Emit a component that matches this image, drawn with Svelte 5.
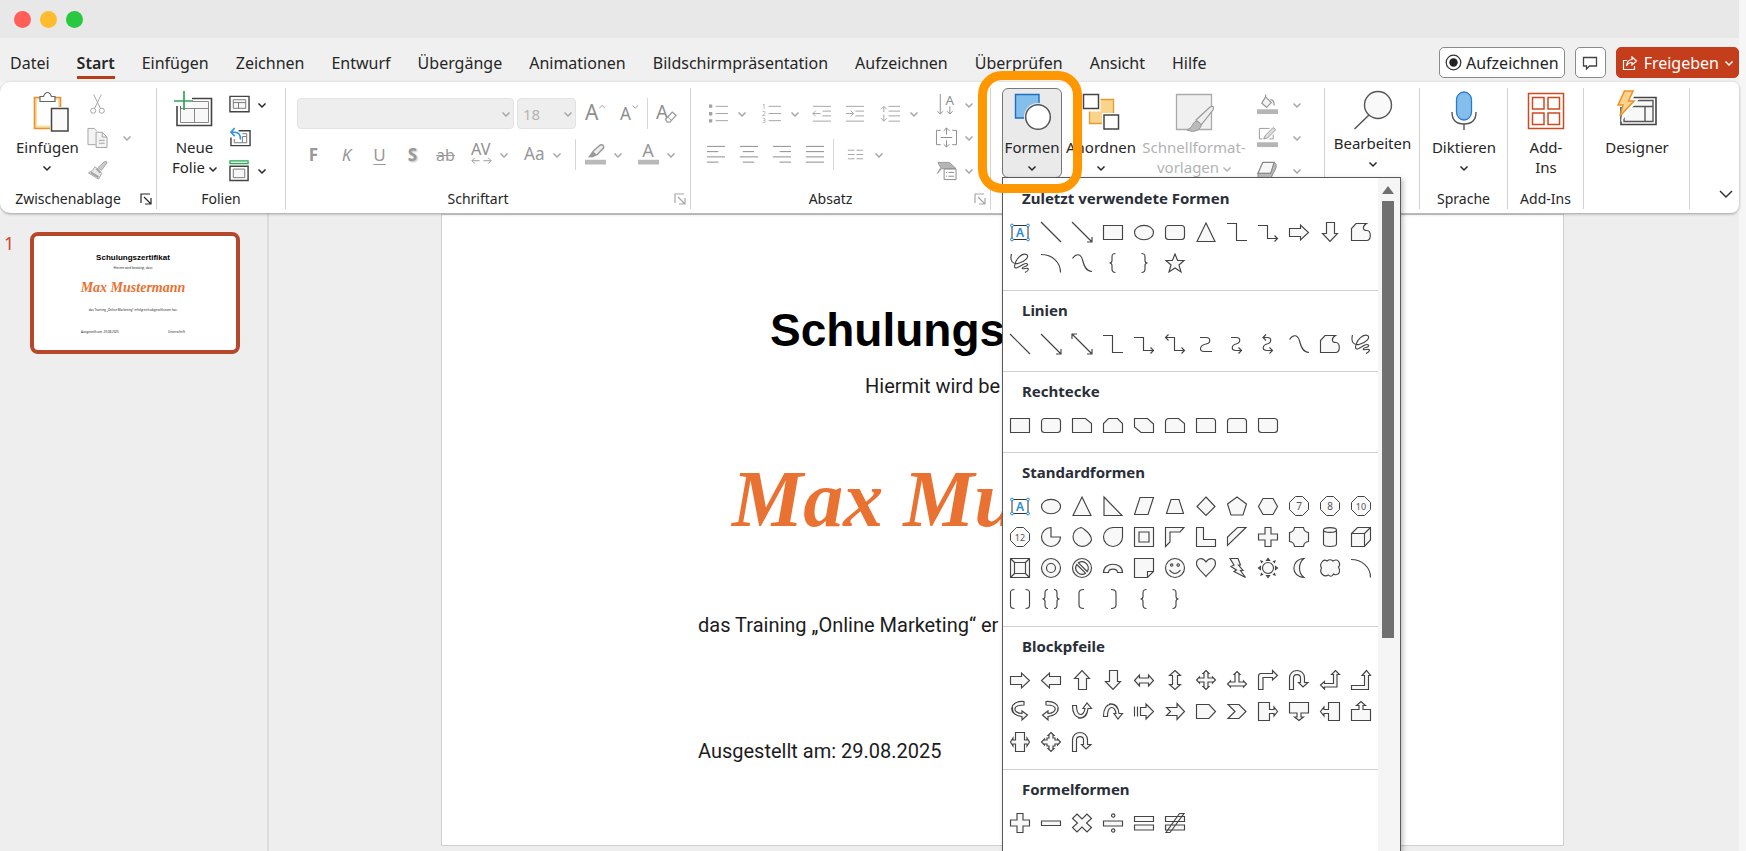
<script>
  const tabs = ['Datei', 'Start', 'Einfügen', 'Zeichnen', 'Entwurf', 'Übergänge', 'Animationen', 'Bildschirmpräsentation', 'Aufzeichnen', 'Überprüfen', 'Ansicht', 'Hilfe'];

  // Shape gallery glyphs on a 20x20 grid. A leading "~" marks an open outline without fill,
  // a leading "<" marks raw SVG markup.
  const g = {
    text: '<path d="M2 3.5h16v14H2z" fill="#fff" stroke="#333"/><text x="10" y="15" font-size="12" font-weight="600" text-anchor="middle" fill="#2b88d0" font-family="Noto Sans">A</text><g fill="#fff" stroke="#1c86d1"><circle cx="2" cy="3.5" r="1.4"/><circle cx="18" cy="3.5" r="1.4"/><circle cx="2" cy="17.5" r="1.4"/><circle cx="18" cy="17.5" r="1.4"/></g>',
    line: '~M0 0L20 20',
    arrow: '~M0 0L20 20M20 15V20H15',
    darrow: '~M0 0L20 20M20 15V20H15M0 5V0H5',
    rect: 'M.5 3.5h19v14h-19z',
    oval: 'M.5 10.5a9.5 7.2 0 1 0 19 0a9.5 7.2 0 1 0-19 0z',
    round: 'M3.5 3.5h13a3 3 0 0 1 3 3v8a3 3 0 0 1-3 3h-13a3 3 0 0 1-3-3v-8a3 3 0 0 1 3-3z',
    tri: 'M10 1L19 19.5H1z',
    elbow: '~M0 1.5H9.5V18.5H20',
    elbowA: '~M0 3.5H9.5V16.5H19.5M16.5 13.5L19.5 16.5L16.5 19.5',
    elbowD: '~M.5 3.5H9.5V16.5H19.5M16.5 13.5L19.5 16.5L16.5 19.5M3.5 .5L.5 3.5L3.5 6.5',
    curve: '~M4 3.5H10C15 3.500 15 9 10 10C3 11.500 3 17.500 8 17.500H16',
    curveA: '~M4 3.500H9C14 3.500 14 8.500 9 10C4 11.500 4 16.500 9 16.500H14.500M11.500 13.500L14.500 16.500L11.500 19.500',
    curveD: '~M5 3.500H9C14 3.500 14 8.500 9 10C4 11.500 4 16.500 9 16.500H14.500M11.500 13.500L14.500 16.500L11.500 19.500M8 .5L5 3.500L8 6.500',
    ra: 'M.5 6.500h11V3L19.500 10.500L11.500 18V14.500H.5z',
    la: 'M19.500 6.500h-11V3L.5 10.500L8.500 18V14.500H19.500z',
    ua: 'M6.500 19.500v-11H2.500L10 .5L17.500 8.500H14.500V19.500z',
    da: 'M6.500 .5v11H2.500L10 19.500L17.500 11.500H14.500V.5z',
    free: 'M5 1.500H15.500C11.500 4 11 8.500 16 8.500C20.500 8.500 20.500 18.500 15.500 18.500H.5V6.500z',
    scribble: '~M1.500 1C-.5 8 3 11.500 8 10.500C15 9 20 3.500 16.500 1.500C12 -.5 5.500 6 4.500 13C4.500 17 9 14 13 11.500C18 9 19.500 12.500 15 13.500C11 14.500 11.500 16.500 15 15.500C19 14.500 20 17 15 19.500',
    arc: '~M0 1.500C11 1.500 19.500 9 19.500 19.500',
    wave: '~M.5 5.500C4 0 9 .5 10.500 7C12 13 14 18.500 20 18.500',
    lb: '~M12.500 .5C9.500 .5 9 1.500 9 4V7.500Q9 10 6.500 10Q9 10 9 12.500V16Q9 19.500 12.500 19.500',
    rb: '~M7.500 .5C10.500 .5 11 1.500 11 4V7.500Q11 10 13.500 10Q11 10 11 12.500V16Q11 19.500 7.500 19.500',
    star: 'M10 1L12.600 7.500H19L14 12L16 19L10 15L4 19L6 12L1 7.500H7.400z',
    snip1: 'M.5 3.500h13l6 5v9h-19z',
    snip2: 'M5.500 3.500h9l5 5v9H.5v-9z',
    snipD: 'M.5 3.500h13l6 5.500v8.500H7L.5 12z',
    snipR: 'M4 3.500h9.500l6 5v9H.5V7Q.5 3.500 4 3.500z',
    rnd1: 'M.5 3.500h16q3 0 3 3v11h-19z',
    rnd2: 'M3.500 3.500h13q3 0 3 3v11h-19v-11q0-3 3-3z',
    rndD: 'M.5 3.500h16q3 0 3 3v8q0 3-3 3h-13q-3 0-3-3z',
    rtri: 'M1 1V19.500H19z',
    para: 'M6 1.500H19.500L14 18.500H.5z',
    trap: 'M6 3.500H14L18.500 17.500H1.500z',
    dia: 'M10 1L19 10.500L10 19.500L1 10.500z',
    pent: 'M10 1L19.500 8L16 19H4L.5 8z',
    hexa: 'M5 2.500H15L19.500 10.500L15 18.500H5L.5 10.500z',
    pie: 'M10 .5A9.500 9.500 0 1 0 19.500 10H10z',
    chord: 'M9 .5A9.500 9.500 0 1 0 19.500 13Q19.500 8 13 3Q11 1 9 .5z',
    tear: 'M10 .5H19.500V10A9.500 9.500 0 1 1 10 .5z',
    frame: 'M.5 .5h19v19H.5zM5 5h10v10H5z',
    half: 'M.5 .5H19L15 5H5V15L.5 19.500z',
    ell: 'M.5 .5H7.500V12.500H19.500V19.500H.5z',
    stripe: 'M10.500 .5H19L.5 18.500V10z',
    plus: 'M7 .5h6V7h6.500v6H13v6.500H7V13H.5V7H7z',
    plaque: 'M5.500 .5H14.500Q15 5 19.500 5.500V14.500Q15 15 14.500 19.500H5.500Q5 15 .5 14.500V5.500Q5 5 5.500 .5z',
    can: 'M3.500 3V17C3.500 20.300 16.500 20.300 16.500 17V3C16.500 -.2 3.500 -.2 3.500 3zC3.500 6.200 16.500 6.200 16.500 3',
    cube: 'M.5 6.500L6.500 .5H19.500V13L13.500 19.500H.5zM.5 6.500H13.500V19.500M13.500 6.500L19.500 .5',
    bevel: 'M.5 .5h19v19H.5zM4.500 4.500h11v11h-11zM.5 .5l4 4M19.500 .5l-4 4M.5 19.500l4-4M19.500 19.500l-4-4',
    donut: 'M.5 10a9.500 9.500 0 1 0 19 0a9.500 9.500 0 1 0-19 0zM5.500 10a4.500 4.500 0 1 0 9 0a4.500 4.500 0 1 0-9 0z',
    no: 'M.5 10a9.500 9.500 0 1 0 19 0a9.500 9.500 0 1 0-19 0zM6.500 4.800A6.300 6.300 0 0 1 15.200 13.500zM4.800 6.500A6.300 6.300 0 0 0 13.500 15.200z',
    barc: 'M.5 14.500C.5 3.500 19.500 3.500 19.500 14.500H14.500C14.500 10 5.500 10 5.500 14.500z',
    fold: 'M.5 .5H19.500V13.500L13.500 19.500H.5zM13.500 19.500V13.500H19.500',
    smile: 'M.5 10a9.500 9.500 0 1 0 19 0a9.500 9.500 0 1 0-19 0zM4.500 12Q10 19 15.500 12M5.500 7a1.200 1.200 0 1 0 2.400 0a1.200 1.200 0 1 0-2.400 0M12 7a1.200 1.200 0 1 0 2.400 0a1.200 1.200 0 1 0-2.400 0',
    heart: 'M10 4C6 -2 .5 1 .5 5.500C.5 11 8 15 10 18.500C12 15 19.500 11 19.500 5.500C19.500 1 14 -2 10 4z',
    bolt: 'M3 .5H11L13.500 7H11.500L16 12.500H13.500L18.500 19.500L7 13.500L9.500 12L4 8.500L7 7z',
    sun: 'M4.500 10a5.500 5.500 0 1 0 11 0a5.500 5.500 0 1 0-11 0zM8.500 2.500L10 .5L11.500 2.500zM8.500 17.500L10 19.500L11.500 17.500zM2.500 8.500L.5 10L2.500 11.500zM17.500 8.500L19.500 10L17.500 11.500zM3 3l1.500 .5l-1 1zM17 3l-1.500 .5l1 1zM3 17l.5-1.500l1 1zM17 17l-.5-1.500l-1 1z',
    moon: 'M15 .5C1.500 1 1.500 19 15 19.500C9 15 9 5 15 .5z',
    cloud: 'M2 4Q4 1 7 3Q10 .5 13 3Q17 .5 19 4Q20.500 7 18.500 9Q21 14 18 16Q15 17.500 13.500 16Q11 20 8.500 17Q5 19 2.500 16.500Q-.5 14 1.500 10Q-.5 7 2 4z',
    brk: '~M4.500 .5Q.5 .5 .5 3.500V16.500Q.5 19.500 4.500 19.500M15.500 .5Q19.500 .5 19.500 3.500V16.500Q19.500 19.500 15.500 19.500',
    brc: '~M7 .5Q4 .5 4 4V7.500Q4 10 1.500 10Q4 10 4 12.500V16Q4 19.500 7 19.500M13 .5Q16 .5 16 4V7.500Q16 10 18.500 10Q16 10 16 12.500V16Q16 19.500 13 19.500',
    bl: '~M12 .5Q7 .5 7 4V16Q7 19.500 12 19.500',
    br: '~M8 .5Q13 .5 13 4V16Q13 19.500 8 19.500',
    lra: 'M.5 10.500L5.500 5V8H14.500V5L19.500 10.500L14.500 16V13H5.500V16z',
    uda: 'M10 .5L15.500 5.500H12.500V14.500H15.500L10 19.500L4.500 14.500H7.500V5.500H4.500z',
    quad: 'M10 .5L13 3.500H12V8H16.500V7L19.500 10L16.500 13V12H12V16.500H13L10 19.500L7 16.500H8V12H3.500V13L.5 10L3.500 7V8H8V3.500H7z',
    tria: 'M10 1.500L13 4.500H12V12H16.500V11L19.500 14L16.500 17V16H3.500V17L.5 14L3.500 11V12H8V4.500H7z',
    bent: 'M.5 19.500V6Q.5 3.500 3 3.500H14.500V.5L19.500 5.500L14.500 10V7.500H5V19.500z',
    uturn: 'M.5 19.500V8C.5 -2 15.500 -2 15.500 8V12.500H19L14 17L9.500 12.500H11.500V8C11.500 3.500 4.500 3.500 4.500 8V19.500z',
    leftup: 'M.5 15L4.500 11.500V13.500H13.500V4.500H11.500L15.500 .5L19.500 4.500H17V17H4.500V19z',
    bentup: 'M.5 15.500H13.500V5.500H11L15.500 .5L19.500 5.500H17.500V19.500H.5z',
    cr: 'M14 .5C-2 -.5 -2 14.500 12 15.500V19L17.500 14L12 10V12.500C3 12 1.500 4 14 4zM2.500 6C2 14 8 15 12 15.500',
    cl: 'M5 .5C21 -.5 21 14.500 7 15.500V19L1.500 14L7 10V12.500C16 12 18 4 5 4zM17 6C17.500 14 11 15 7 15.500',
    cu: 'M.5 4.500C0 20.500 15 20.500 16 7.500H19.500L15 2L11 7.500H13C12 16 4.500 16 4.500 4.500zM6 17C14 18 15.500 12 16 7.500',
    cd: 'M.5 15.500C0 -.5 15 -.5 16 12.500H19.500L15 18L11 12.500H13C12 4 4.500 4 4.500 15.500zM6 3C14 2 15.500 8 16 12.500',
    striped: 'M.5 5.500V15.500M3.500 5.500V15.500M6.500 6.500H12V3L19.500 10.500L12 18V14.500H6.500z',
    notch: 'M1.500 6.500H12V2.500L19.500 10.500L12 18.500V14.500H1.500L5.500 10.500z',
    penta: 'M.5 3.500H13L19.500 10.500L13 17.500H.5z',
    chev: 'M1 3.500H12L19 10.500L12 17.500H1L8 10.500z',
    cor: 'M.5 1.500H11.500V8.500H16V6L19.500 10.500L16 15V12.500H11.500V19.500H.5z',
    cod: 'M.5 1.500H19.500V12H12V16H14.500L10 19.500L5.500 16H8V12H.5z',
    col: 'M19.500 1.500H8.500V8.500H4V6L.5 10.500L4 15V12.500H8.500V19.500H19.500z',
    cou: 'M.5 19.500H19.500V8.500H12V4.500H14.500L10 .5L5.500 4.500H8V8.500H.5z',
    colr: 'M5.500 .5H14.500V8H17V6L19.500 10L17 14V12H14.500V19.500H5.500V12H3V14L.5 10L3 6V8H5.500z',
    coq: 'M10 .5L13 3.500H12V6H14V8H16.500V7L19.500 10L16.500 13V12H14V14H12V16.500H13L10 19.500L7 16.500H8V14H6V12H3.500V13L.5 10L3.500 7V8H6V6H8V3.500H7z',
    minus: 'M.5 8h19v4.500H.5z',
    times: 'M5 1L10 6L15 1L19.500 5.500L14.500 10L19.500 14.500L15 19L10 14L5 19L.5 14.500L5.500 10L.5 5.500z',
    div: 'M.5 8h19v5H.5zM8.500 2.500a1.700 1.700 0 1 0 3.400 0a1.700 1.700 0 1 0-3.400 0M8.500 17.500a1.700 1.700 0 1 0 3.400 0a1.700 1.700 0 1 0-3.400 0',
    eq: 'M.5 3.500h19v5H.5zM.5 12h19v5H.5z',
    neq: 'M.5 3.500h19v5H.5zM.5 12h19v5H.5zM14.500 .5H19L5 19.500H1z'
  };
  const octagon = (n) => `<path d="M6.500 .5h7l6 6v7l-6 6h-7l-6-6v-7z" fill="#fafafa" stroke="#444"/><text x="10" y="13.500" font-size="${n.length > 1 ? 9 : 10}" text-anchor="middle" fill="#555" font-family="Noto Sans">${n}</text>`;
  for (const n of ['7', '8', '10', '12']) g['n' + n] = octagon(n);

  const glyph = (k) => {
    const s = g[k];
    if (s[0] === '<') return s;
    const open = s[0] === '~';
    return `<path d="${open ? s.slice(1) : s}" fill="${open ? 'none' : '#f8f8f8'}" stroke="#444" stroke-width="1.150"/>`;
  };

  const sections = [
    ['Zuletzt verwendete Formen', 'text line arrow rect oval round tri elbow elbowA ra da free scribble arc wave lb rb star'],
    ['Linien', 'line arrow darrow elbow elbowA elbowD curve curveA curveD wave free scribble'],
    ['Rechtecke', 'rect round snip1 snip2 snipD snipR rnd1 rnd2 rndD'],
    ['Standardformen', 'text oval tri rtri para trap dia pent hexa n7 n8 n10 n12 pie chord tear frame half ell stripe plus plaque can cube bevel donut no barc fold smile heart bolt sun moon cloud arc brk brc bl br lb rb'],
    ['Blockpfeile', 'ra la ua da lra uda quad tria bent uturn leftup bentup cr cl cu cd striped notch penta chev cor cod col cou colr coq uturn'],
    ['Formelformen', 'plus minus times div eq neq']
  ].map(([title, keys]) => ({ title, keys: keys.split(' ') }));

  const G = '#a3a3a3';
  const T = 'font-family="Noto Sans"';
  // Small ribbon icons, 22x22
  const s = {
    cut: `<path d="M7 .5L14 15M15 .5L8 15" stroke="${G}" fill="none"/><circle cx="6.500" cy="17.500" r="2.700" fill="none" stroke="${G}"/><circle cx="15.500" cy="17.500" r="2.700" fill="none" stroke="${G}"/>`,
    copy: `<path d="M9 18.500H1V1.500H7.500L10 4" fill="#f3f3f3" stroke="${G}"/><path d="M9.500 5.500H16L21 10.500V21.500H9.500z" fill="#f3f3f3" stroke="${G}"/><path d="M16 5.500V10.500H21M12.500 14h6M12.500 17h6" fill="none" stroke="${G}"/>`,
    brush: `<path d="M11.500 8L18 2Q21 .5 21 3L15 11z" fill="#ccc" stroke="${G}"/><path d="M8.500 7L15.500 14L12 20L1.500 13.500Q6 12 8.500 7z" fill="#e8e8e8" stroke="${G}"/><path d="M4 13L12 18M10 9L14 13.500" stroke="${G}" stroke-width="2"/>`,
    layout: '<path d="M1 2.500h20v16H1z" fill="#fff" stroke="#444" stroke-width="1.500"/><path d="M4.500 6h13v9h-13zM4.500 9h13M10 9v6" fill="#f7f7f7" stroke="#777"/>',
    reset: '<path d="M9 4h12v15.500H1V11" fill="#fff" stroke="#444" stroke-width="1.500"/><path d="M13 7h4.500v9.500h-13v-4M13 10h4M13 10v6" fill="none" stroke="#777"/><path d="M1 5.500H5Q11 5.500 11 13M5 1L1 5.500L5 9.500" fill="none" stroke="#2b95e0" stroke-width="1.700"/>',
    section: '<path d="M1 .8h19v3H1z" fill="#d5f2dc" stroke="#2fa558" stroke-width="1.300"/><path d="M1 6.500h19v15H1z" fill="#fff" stroke="#444" stroke-width="1.500"/><path d="M4.500 9.500h12v9h-12z" fill="#f7f7f7" stroke="#777"/>',
    bullets: `<path d="M8 3.500h13M8 11h13M8 18.500h13" stroke="${G}"/><path d="M1 1.500h3.500v3.500H1zM1 9.500h3.500V13H1zM1 17h3.500v3.500H1z" fill="${G}"/>`,
    numbers: `<path d="M8 3.500h13M8 11h13M8 18.500h13" stroke="${G}"/><g fill="${G}" font-size="7" ${T}><text x="1" y="6">1</text><text x="1" y="13.500">2</text><text x="1" y="21">3</text></g>`,
    outdent: `<path d="M2 3.500h19M12 8.500h9M12 13.500h9M2 19h19M2 11h8M5 8L2 11L5 14" stroke="${G}" fill="none"/>`,
    indent: `<path d="M2 3.500h19M12 8.500h9M12 13.500h9M2 19h19M2 11h8M7 8L10 11L7 14" stroke="${G}" fill="none"/>`,
    spacing: `<path d="M9 3.500h12M9 8.500h12M9 13.500h12M9 19h12M4 3.500v6M1 6.500l3-3l3 3M4 12v7M1 16l3 3l3-3" stroke="${G}" fill="none"/>`,
    left: '<path d="M2 2.500h19M2 8h12M2 13.500h19M2 19h12" stroke="#888"/>',
    center: '<path d="M2 2.500h19M5 8h12M2 13.500h19M5 19h12" stroke="#888"/>',
    right: '<path d="M2 2.500h19M9 8h12M2 13.500h19M9 19h12" stroke="#888"/>',
    just: '<path d="M2 2.500h19M2 8h19M2 13.500h19M2 19h19" stroke="#888"/>',
    cols: `<path d="M3 6.500h7M3 11h7M3 15.500h7M12 6.500h7M12 11h7M12 15.500h7" stroke="${G}"/>`,
    sort: `<path d="M4.500 0v21M1.500 18l3 3l3-3M14.500 13v8M11.500 18l3 3l3-3" stroke="#8f8f8f" fill="none"/><text x="10" y="11" font-size="14" fill="#8f8f8f" ${T}>A</text>`,
    valign: '<path d="M5 3.500H.5v15H5M17 3.500h4.500v15H17M11 1v7M8 4l3-3l3 3M11 14v7M8 18l3 3l3-3M5 11h12" stroke="#8c8c8c" fill="none"/>',
    smart: '<path d="M2 2.500H14L21 9H6L1.500 14L5 8z" fill="#b5b5b5" stroke="#999"/><path d="M8.500 9.500H21v11H8.500z" fill="#fff" stroke="#888"/><path d="M13 13h6M13 17h6M10.500 13h1M10.500 17h1" stroke="#888"/>',
    fill: '<path d="M9 3L15 9L10 14L5 9.500zM9 3V.5M14 6q4 0 4 6" fill="#f2f2f2" stroke="#999" stroke-width="1.300"/><path d="M0 16h22v5H0z" fill="#b5b5b5"/>',
    outline: '<path d="M13 1.500H2.500v11h3M17 8v4.500h-4" fill="none" stroke="#999"/><path d="M7 12.500L8.500 9L17 .5L19.500 3L11 11.500z" fill="#ddd" stroke="#999"/><path d="M0 16h22v5H0z" fill="#b5b5b5"/>',
    effect: '<path d="M1 14L6 2.500H18L14.500 14z" fill="#f7f7f7" stroke="#888" stroke-width="1.300"/><path d="M1 14V19H14.500L20 8V4.500L18 2.500L14.500 14z" fill="#bbb" stroke="#888"/>',
    grow: `<text x="0" y="18" font-size="22" fill="#8f8f8f" ${T}>A</text><path d="M15 5.500l3-3l3 3" fill="none" stroke="#999"/>`,
    shrink: `<text x="2" y="18" font-size="18" fill="#8f8f8f" ${T}>A</text><path d="M15 2.500l3 3l3-3" fill="none" stroke="#999"/>`,
    clear: `<text x="0" y="17" font-size="20" fill="#8f8f8f" ${T}>A</text><path d="M10 17L17 9.500L21 13L14.500 20H12z" fill="#fff" stroke="#999" stroke-width="1.300"/><path d="M12 14.500L16 18" stroke="#999"/>`,
    av: `<text x="0" y="12" font-size="17" fill="#8f8f8f" ${T}>AV</text><path d="M1 17.500h8M13 17.500h8M4 14.500l-3 3l3 3M18 14.500l3 3l-3 3" fill="none" stroke="#999"/>`,
    aa: `<text x="0" y="17" font-size="18" fill="#999" ${T}>Aa</text>`,
    marker: '<path d="M5 13L9 7L16 1Q20 0 19.500 4L13 11L8 13z" fill="#eee" stroke="#999" stroke-width="1.500"/><path d="M3 14L9 8L12 11L8 13.500z" fill="#999"/><path d="M0 16.500h22v5H0z" fill="#b9b9b9"/>',
    color: `<text x="4.500" y="14" font-size="19" fill="#999" ${T}>A</text><path d="M0 16.500h22v5H0z" fill="#b9b9b9"/>`
  };

  // Large ribbon icons, 44x44
  const b = {
    paste: '<path d="M9.500 8.500h26v31H9.500z" fill="#f9dfa5" stroke="#e8912d" stroke-width="1.600"/><path d="M12 10.500h21v26H12z" fill="#fff"/><path d="M15 12.500V7.500H18.500Q20 3.500 22.500 3.500Q25 3.500 26.500 7.500H30V12.500z" fill="#fff" stroke="#666" stroke-width="1.200"/><path d="M25 18h20v26H25z" fill="#fff"/><path d="M26.500 19.500h16.500v22.500H26.500z" fill="#fafafa" stroke="#444" stroke-width="1.500"/>',
    slide: '<path d="M5 9.500h34.500v27H5z" fill="#fff" stroke="#444" stroke-width="1.600"/><path d="M8.500 12.500h28v21h-28z" fill="#f8f8f8" stroke="#888"/><path d="M8.500 19.500h28M22.500 19.500v14" stroke="#888"/><path d="M0 0h20v17H0z" fill="#fff"/><path d="M12 2v19M2 12h19" stroke="#33a35c" stroke-width="1.700"/><path d="M5 17v4M8.500 17v4" stroke="#666"/>',
    shapes: '<path d="M5.500 5.500h23.500v23.500H5.500z" fill="#83beec" stroke="#1f6fc0" stroke-width="1.400"/><circle cx="28" cy="28" r="14" fill="#eaeaea"/><circle cx="28" cy="28" r="12.300" fill="#fff" stroke="#555" stroke-width="1.500"/>',
    arrange: '<path d="M10.500 10.500h24v24h-24z" fill="#f9d48a" stroke="#e39a33" stroke-width="1.300"/><path d="M2.500 3.500h19v19h-19zM23 24h18v18H23z" fill="#fff"/><path d="M4.500 5.500h15v14h-15zM25 26h14.500v14H25z" fill="#fff" stroke="#444" stroke-width="1.500"/>',
    styles: '<path d="M4.500 5.500h35v35h-35z" fill="#f0f0f0" stroke="#aaa" stroke-width="1.300"/><path d="M24 31L38 18Q43 16 41 21L29 36z" fill="#eee" stroke="#999" stroke-width="1.200"/><path d="M15 41Q20 39 21 35Q24 30 28 34Q31 37 26 41Q21 44 15 41z" fill="#bbb" stroke="#999"/>',
    find: '<circle cx="27" cy="16" r="13.500" fill="#f9f9f9" stroke="#555" stroke-width="1.400"/><path d="M18 26L3.500 40" stroke="#555" stroke-width="1.500"/>',
    mic: '<path d="M14.500 11a7.500 8 0 0 1 15 0v12a7.500 8 0 0 1-15 0z" fill="#83beec" stroke="#2b7cc8" stroke-width="1.300"/><path d="M10 23Q10 35 22 35Q34 35 34 23M22 35V41" fill="none" stroke="#555" stroke-width="1.400"/>',
    addins: '<path d="M4.500 4.500h35v35h-35zM8.500 8.500h11.500v11.500H8.500zM24 8.500h11.500v11.500H24zM8.500 24h11.500v11.500H8.500zM24 24h11.500v11.500H24z" fill="#fff" stroke="#cf4a20" stroke-width="1.500"/>',
    design: '<path d="M6 8.500h35v27H6z" fill="#fff" stroke="#444" stroke-width="1.600"/><path d="M9 11.500h29v21H9zM9 17.500h29M30 17.500v15" fill="#f8f8f8" stroke="#555" stroke-width="1.400"/><path d="M11 0H22L18 10H24L6 33L8 18H2V5z" fill="#fff"/><path d="M9.500 2H18L13.500 12H19L5 27L8 16H3z" fill="#fbd38b" stroke="#e8912d" stroke-width="1.500"/>'
  };
</script>

{#snippet chev()}
  <svg class="chev" viewBox="0 0 8 8" aria-hidden="true"><path d="M.5 2.500L4 6L7.500 2.500" fill="none" stroke="currentColor" stroke-width="1.500" /></svg>
{/snippet}

{#snippet small(key, label, split)}
  <button class={split ? 'split' : 'tool'} aria-label={label}>
    <svg class="s-icon" viewBox="0 0 22 22" aria-hidden="true">{@html s[key]}</svg>
    {#if split}{@render chev()}{/if}
  </button>
{/snippet}

{#snippet bigIcon(key)}
  <svg class="b-icon" viewBox="0 0 44 44" aria-hidden="true">{@html b[key]}</svg>
{/snippet}

{#snippet foot(text, launcher, muted)}
  <footer class="foot">
    <span>{text}</span>
    {#if launcher}
      <button class={['launcher', muted && 'muted']} aria-label={text + ' Optionen'}>
        <svg viewBox="0 0 12 12" aria-hidden="true"><path d="M1 10V1H10M4 4L11 11M11 5V11H5" fill="none" stroke="currentColor" stroke-width="1.200" /></svg>
      </button>
    {/if}
  </footer>
{/snippet}

<div class="window">
  <div class="titlebar">
    <i class="dot red"></i><i class="dot amber"></i><i class="dot green"></i>
  </div>

  <header class="tabbar">
    <nav class="tabs">
      {#each tabs as t}
        <a href="#{t}" class={{ active: t === 'Start' }}>{t}</a>
      {/each}
    </nav>
    <div class="actions">
      <button class="action">
        <svg width="17" height="17" viewBox="0 0 17 17" aria-hidden="true"><circle cx="8.500" cy="8.500" r="7.300" fill="#fff" stroke="#333" stroke-width="1.200" /><circle cx="8.500" cy="8.500" r="4.200" fill="#222" /></svg>
        Aufzeichnen
      </button>
      <button class="action comment" aria-label="Kommentare">
        <svg width="16" height="16" viewBox="0 0 16 16" aria-hidden="true"><path d="M1.500 2.500h13v8.500H7.500L4.500 14V11h-3z" fill="none" stroke="#444" stroke-width="1.300" /></svg>
      </button>
      <button class="action share">
        <svg width="16" height="16" viewBox="0 0 16 16" aria-hidden="true"><path d="M5 5.500H1.500v9h11V11M10 2l4.500 4L10 10V7.500Q6 7.500 4.500 11Q5 5 10 4.500z" fill="none" stroke="#fff" stroke-width="1.200" /></svg>
        Freigeben {@render chev()}
      </button>
    </div>
  </header>

  <section class="ribbon">
    <div class="group">
      <div class="body clip">
        <button class="big">{@render bigIcon('paste')}<span>Einfügen</span>{@render chev()}</button>
        <div class="stack muted">
          {@render small('cut', 'Ausschneiden', false)}
          {@render small('copy', 'Kopieren', true)}
          {@render small('brush', 'Format übertragen', false)}
        </div>
      </div>
      {@render foot('Zwischenablage', true, false)}
    </div>

    <div class="group">
      <div class="body slides">
        <button class="big">{@render bigIcon('slide')}<span>Neue<br />Folie {@render chev()}</span></button>
        <div class="stack">
          {@render small('layout', 'Layout', true)}
          {@render small('reset', 'Zurücksetzen', false)}
          {@render small('section', 'Abschnitt', true)}
        </div>
      </div>
      {@render foot('Folien', false, false)}
    </div>

    <div class="group">
      <div class="body rows muted">
        <div class="row">
          <label class="combo name">
            <select disabled aria-label="Schriftart"><option></option></select>{@render chev()}
          </label>
          <label class="combo size">
            <select disabled aria-label="Schriftgrad"><option>18</option></select>{@render chev()}
          </label>
          <div class="row sizing">
            {@render small('grow', 'Schriftgrad vergrößern', false)}
            {@render small('shrink', 'Schriftgrad verkleinern', false)}
            <i class="rule tight"></i>
            {@render small('clear', 'Formatierung löschen', false)}
          </div>
        </div>
        <div class="row">
          <button class="tool letter"><b>F</b></button>
          <button class="tool letter"><em>K</em></button>
          <button class="tool letter"><u>U</u></button>
          <button class="tool letter shadow"><b>S</b></button>
          <button class="tool letter strike"><s>ab</s></button>
          {@render small('av', 'Zeichenabstand', true)}
          {@render small('aa', 'Groß-/Kleinschreibung', true)}
          <i class="rule"></i>
          {@render small('marker', 'Texthervorhebung', true)}
          {@render small('color', 'Schriftfarbe', true)}
        </div>
      </div>
      {@render foot('Schriftart', true, true)}
    </div>

    <div class="group">
      <div class="body para muted">
        <div class="rows">
          <div class="row">
            {@render small('bullets', 'Aufzählung', true)}
            {@render small('numbers', 'Nummerierung', true)}
            {@render small('outdent', 'Einzug verkleinern', false)}
            {@render small('indent', 'Einzug vergrößern', false)}
            {@render small('spacing', 'Zeilenabstand', true)}
          </div>
          <div class="row">
            {@render small('left', 'Linksbündig', false)}
            {@render small('center', 'Zentriert', false)}
            {@render small('right', 'Rechtsbündig', false)}
            {@render small('just', 'Blocksatz', false)}
            <i class="rule tight"></i>
            {@render small('cols', 'Spalten', true)}
          </div>
        </div>
        <div class="stack">
          {@render small('sort', 'Textrichtung', true)}
          {@render small('valign', 'Text ausrichten', true)}
          {@render small('smart', 'In SmartArt konvertieren', true)}
        </div>
      </div>
      {@render foot('Absatz', true, true)}
    </div>

    <div class="group">
      <div class="body draw">
        <div class="anchor">
          <button class="big open" aria-expanded="true">{@render bigIcon('shapes')}<span>Formen</span>{@render chev()}</button>
          <div class="menu">
            <div class="gallery">
              {#each sections as sec}
                <section>
                  <h3>{sec.title}</h3>
                  <div class="grid">
                    {#each sec.keys as k}
                      <button aria-label={k}><svg viewBox="0 0 20 20" aria-hidden="true">{@html glyph(k)}</svg></button>
                    {/each}
                  </div>
                </section>
              {/each}
            </div>
            <div class="scroll"><i class="up"></i><i class="thumb"></i></div>
          </div>
          <div class="ring"></div>
        </div>
        <button class="big arrange">{@render bigIcon('arrange')}<span>Anordnen</span>{@render chev()}</button>
        <button class="big styles muted">{@render bigIcon('styles')}<span>Schnellformat-<br />vorlagen {@render chev()}</span></button>
        <div class="stack muted">
          {@render small('fill', 'Fülleffekt', true)}
          {@render small('outline', 'Formkontur', true)}
          {@render small('effect', 'Formeffekte', true)}
        </div>
      </div>
    </div>

    <div class="group">
      <div class="body solo"><button class="big find">{@render bigIcon('find')}<span>Bearbeiten</span>{@render chev()}</button></div>
    </div>
    <div class="group">
      <div class="body solo"><button class="big">{@render bigIcon('mic')}<span>Diktieren</span>{@render chev()}</button></div>
      {@render foot('Sprache', false, false)}
    </div>
    <div class="group">
      <div class="body solo"><button class="big">{@render bigIcon('addins')}<span>Add-<br />Ins</span></button></div>
      {@render foot('Add-Ins', false, false)}
    </div>
    <div class="group">
      <div class="body solo"><button class="big">{@render bigIcon('design')}<span>Designer</span></button></div>
    </div>
    <div class="group last">
      <button class="collapse" aria-label="Menüband reduzieren"><svg width="14" height="10" viewBox="0 0 14 10" aria-hidden="true"><path d="M1 2L7 8L13 2" fill="none" stroke="#333" stroke-width="1.500" /></svg></button>
    </div>
  </section>

  <main class="work">
    <aside class="panel">
      <span class="num">1</span>
      <div class="mini">
        <strong>Schulungszertifikat</strong>
        <small>Hiermit wird bestätigt, dass</small>
        <em>Max Mustermann</em>
        <small>das Training „Online Marketing“ erfolgreich abgeschlossen hat.</small>
        <div class="sign"><small>Ausgestellt am: 29.08.2025</small><small>Unterschrift</small></div>
      </div>
    </aside>
    <div class="canvas">
      <article class="slide">
        <h1>Schulungs</h1>
        <p class="sub">Hiermit wird be</p>
        <p class="person">Max Mu</p>
        <p>das Training „Online Marketing“ er</p>
        <p class="date">Ausgestellt am: 29.08.2025</p>
      </article>
    </div>
  </main>
</div>

<style>
  :global(body) { margin: 0; background: #f6f6f6; }
  * { box-sizing: border-box; }
  .window {
    height: 100vh; overflow: hidden; display: flex; flex-direction: column; padding-right: 7px;
    background: #f6f6f6; color: #262626; font: 15px/20px "Noto Sans", sans-serif;
  }
  button { border: 0; background: none; padding: 0; margin: 0; color: inherit; font: inherit; }
  svg { flex: none; overflow: visible; }

  .titlebar { flex: none; height: 38px; background: #e8e8e8; display: flex; align-items: center; gap: 9px; padding: 0 14px; }
  .dot { width: 17px; height: 17px; border-radius: 50%; }
  .red { background: #ff5f57; }
  .amber { background: #febc2e; }
  .green { background: #28c840; }

  .tabbar { flex: none; height: 44px; display: flex; justify-content: space-between; padding-left: 10px; background: #f0f0f0; }
  .tabs { display: flex; gap: 27px; padding-top: 13px; font-size: 16px; line-height: 24px; white-space: nowrap; }
  .tabs a { color: inherit; text-decoration: none; height: 28px; }
  .tabs .active { font-weight: 600; border-bottom: 3px solid #b83c1a; }
  .actions { display: flex; gap: 10px; padding-top: 9px; font-size: 16px; }
  .action { height: 31px; display: flex; align-items: center; justify-content: center; gap: 4px; padding: 0 5px; background: #fff; border: 1px solid #8a8a8a; border-radius: 5px; }
  .comment { width: 31px; padding: 0; }
  .share { background: #c43e1c; border-color: #c43e1c; color: #fff; gap: 6px; }

  .ribbon {
    flex: none; height: 131px; padding: 6px 0 4px; background: #fff; border-radius: 10px 6px 8px 10px;
    box-shadow: 0 1px 3px rgba(0, 0, 0, .35); display: grid; position: relative; z-index: 2;
    grid-template-columns: 157fr 129fr 405fr 300fr 334fr 95fr 88fr 76fr 106fr 49fr;
  }
  .group { min-width: 0; display: flex; flex-direction: column; border-right: 1px solid #d2d2d2; }
  .last { border: 0; justify-content: flex-end; align-items: flex-end; padding: 0 6px 6px 0; }
  .body { flex: 1; display: flex; min-height: 0; }
  .foot { flex: none; height: 20px; display: flex; align-items: center; font-size: 14px; }
  .foot span { flex: 1; text-align: center; }
  .launcher { width: 20px; height: 12px; display: flex; padding-left: 4px; }
  .launcher svg { width: 12px; height: 12px; }
  .muted { color: #a6a6a6; }

  .chev { width: 8px; height: 8px; }
  .s-icon { width: 21px; height: 21px; }
  .b-icon { width: 44px; height: 44px; margin-bottom: 4px; }
  .big { height: 90px; border: 1px solid transparent; display: flex; flex-direction: column; align-items: center; white-space: nowrap; }
  .big > .chev { margin-top: 7px; }
  .big.find .b-icon { margin-bottom: 0; }
  .stack { display: flex; flex-direction: column; }
  .stack > :global(button) { height: 33px; }
  .tool { width: 33px; height: 31px; display: flex; align-items: center; justify-content: center; }
  .split { width: 53px; height: 31px; padding-left: 9px; display: flex; align-items: center; gap: 8px; }

  .clip { padding-left: 15px; }
  .clip .tool { padding-left: 3px; }
  .clip .split { padding-left: 7px; gap: 15px; }
  .slides { padding-left: 14px; gap: 2px; }
  .slides .tool, .slides .split { padding-left: 9px; }

  .rows { padding: 10px 0 0 11px; flex-direction: column; display: flex; gap: 10px; }
  .row { display: flex; align-items: center; height: 31px; }
  .sizing { padding-left: 3px; }
  .combo { display: grid; height: 31px; align-items: center; margin-right: 3px; }
  .combo > * { grid-area: 1 / 1; }
  .combo > :global(svg) { justify-self: end; margin-right: 4px; }
  .combo select { appearance: none; width: 100%; height: 31px; padding: 0 5px; border: 1px solid #e2e2e2; border-radius: 4px; background: #eee; color: #b4b4b4; font: inherit; opacity: 1; }
  .name { width: 217px; }
  .size { width: 59px; margin-right: 0; }
  .rule { width: 1px; height: 31px; margin: 0 0 0 7px; background: #d6d6d6; }
  .rule.tight { margin: 0 2px; }
  .letter { font-size: 17px; color: #999; }
  .letter u { text-underline-offset: 3px; }
  .strike { font-size: 16px; }
  .shadow b { text-shadow: 1px 1px 2px #bbb; }

  .para .rows { padding-left: 8px; flex: 1; }
  .para .rows .split { gap: 9px; }
  .para .stack { padding-right: 12px; }
  .para .stack .split, .draw .stack .split { padding-left: 0; width: 42px; gap: 8px; }

  .draw { padding-left: 11px; }
  .anchor { position: relative; z-index: 5; }
  .open { width: 60px; border: 1px solid #777; border-radius: 6px; background: #eaeaea; }
  .arrange { width: 78px; }
  .styles { width: 108px; color: #b3b3b3; }
  .draw .stack { padding-left: 9px; }
  .draw .stack .split { gap: 15px; width: 46px; }
  .solo { justify-content: center; padding-left: 1px; }

  .ring { position: absolute; top: -17px; left: -24px; width: 104px; height: 122px; border: 9px solid #ff9800; border-radius: 24px; pointer-events: none; }
  .menu { position: absolute; top: 89px; left: 0; width: 399px; height: calc(100vh - 177px); display: flex; background: #fff; border: 1px solid #5a5a5a; border-bottom: 0; box-shadow: 2px 2px 5px rgba(0, 0, 0, .25); }
  .gallery { flex: 1; }
  .gallery section { border-top: 1px solid #d0d0d0; padding-bottom: 12px; }
  .gallery section:first-child { border-top-color: transparent; }
  .gallery h3 { margin: 0; height: 37px; padding-left: 19px; font-size: 15px; line-height: 38px; font-weight: 700; color: #2a2e38; }
  .grid { display: grid; grid-template-columns: repeat(12, 31px); padding-left: 1px; }
  .grid button { height: 31px; display: grid; place-items: center; }
  .grid svg { width: 20px; height: 20px; }
  .scroll { width: 22px; padding: 8px 4px 0; background: #f5f5f5; display: flex; flex-direction: column; gap: 7px; }
  .up { width: 12px; height: 8px; background: #707070; clip-path: polygon(50% 0, 100% 100%, 0 100%); }
  .thumb { width: 12px; height: 437px; background: #707070; }

  .work { flex: 1; min-height: 0; display: flex; background: #eee; }
  .panel { width: 269px; border-right: 2px solid #dcdcdc; display: flex; align-items: flex-start; gap: 16px; padding: 19px 0 0 4px; }
  .num { width: 10px; color: #d2452c; font-size: 18px; line-height: 22px; }
  .mini { width: 210px; height: 122px; border: 4px solid #b7472a; border-radius: 8px; background: #fff; color: #222; display: flex; flex-direction: column; align-items: center; padding: 16px 4px 0 0; white-space: nowrap; }
  .mini strong { font: 700 8px/12px "Liberation Sans", sans-serif; color: #000; }
  .mini small { font-size: 3px; line-height: 8px; }
  .mini em { font: italic 700 14px/20px "Brush Script MT", "Liberation Serif", serif; color: #e97132; margin: 6px 0 8px; }
  .sign { width: 104px; display: flex; justify-content: space-between; margin-top: 14px; }
  .canvas { flex: 1; padding: 1px 175px 0 172px; }
  .slide { aspect-ratio: 16 / 9; overflow: hidden; background: #fff; border: 1px solid #cfcfcf; color: #1c1c1c; font: 20px/26px "Roboto", sans-serif; white-space: nowrap; padding-top: 87px; }
  .slide h1 { margin: 0 0 0 328px; font: 700 46px/56px "Liberation Sans", sans-serif; color: #000; }
  .slide p { margin: 0; padding-left: 256px; }
  .slide .sub { padding: 15px 0 0 423px; }
  .slide .person { padding: 52px 0 65px 290px; font: italic 700 80px/96px "Brush Script MT", "Liberation Serif", serif; color: #e97132; }
  .slide .date { padding-top: 100px; }
</style>
